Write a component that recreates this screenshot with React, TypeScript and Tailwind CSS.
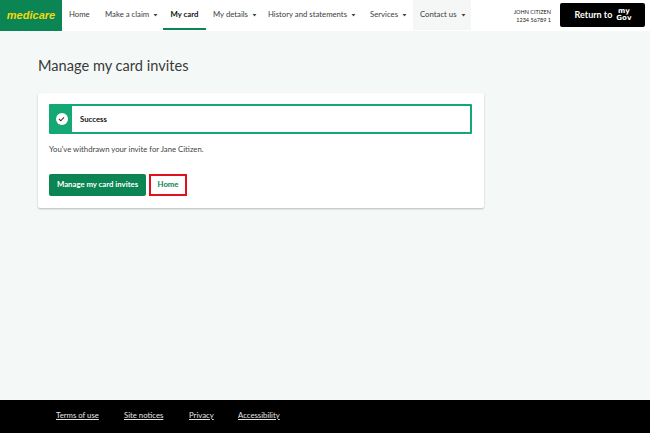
const font = { fontFamily: 'Lato, "Open Sans", "Liberation Sans", sans-serif' };

function Caret() {
  return (
    <svg width="5" height="3" viewBox="0 0 5 3" className="ml-[4px] mt-[1px] shrink-0">
      <path d="M0.5 0h4L2.5 2.5z" fill="#444" />
    </svg>
  );
}

function NavItem({ label, caret, className }: { label: string; caret?: boolean; className: string }) {
  return (
    <a className={`flex items-center whitespace-nowrap text-[7.75px] text-[#3b3b3b] ${className}`}>
      {label}
      {caret && <Caret />}
    </a>
  );
}

export default function App() {
  return (
    <div style={font} className="flex h-[433px] w-[650px] flex-col overflow-hidden bg-[#f4f9f7]">
      <header className="flex h-[31px] shrink-0 items-stretch bg-white">
        <div className="flex w-[62px] items-center justify-center bg-[#0a8553]">
          <span className="text-[11px] font-bold italic leading-none text-[#f5d90a]" style={{ fontFamily: '"Liberation Sans", sans-serif' }}>
            medicare
          </span>
        </div>
        <nav className="flex h-[30px] items-stretch">
          <NavItem label="Home" className="w-[43px] pl-[7px]" />
          <NavItem label="Make a claim" caret className="w-[58px]" />
          <a className="flex w-[43px] items-center justify-center border-b-2 border-[#0a8553] pt-[2px] text-[7.75px] font-bold text-[#111]">
            My card
          </a>
          <NavItem label="My details" caret className="w-[55px] pl-[7px]" />
          <NavItem label="History and statements" caret className="w-[102px] pl-[7px]" />
          <NavItem label="Services" caret className="w-[50px] pl-[7px]" />
          <NavItem label="Contact us" caret className="w-[58px] pl-[7px] bg-[#f5f6f6]" />
        </nav>
        <div className="ml-auto flex items-start pt-[3px] pr-[5px]">
          <div className="mr-[9px] pt-[5px] text-right text-[5.5px] leading-[8px] text-[#222]">
            <div>JOHN CITIZEN</div>
            <div>1234 56789 1</div>
          </div>
          <a className="flex h-[24px] w-[85px] items-center justify-center rounded-[2px] bg-black pl-[1px] text-white">
            <span className="text-[9px] font-bold">Return to</span>
            <span className="ml-[4px] text-center text-[7px] font-bold leading-[7.5px]" style={{ fontFamily: '"DejaVu Sans", sans-serif' }}>
              <span className="block">my</span>
              <span className="block">Gov</span>
            </span>
          </a>
        </div>
      </header>

      <main className="flex-1 pl-[38px] pt-[24px]">
        <h1 className="text-[14.6px] font-normal leading-[22px] text-[#3a3a3a]">Manage my card invites</h1>
        <section className="mt-[16px] h-[115px] w-[446px] rounded-[2px] bg-white px-[11px] pt-[11px] shadow-[0_1px_2px_rgba(0,0,0,0.25)]">
          <div className="flex h-[30px] w-[423px] overflow-hidden rounded-[1px] border-2 border-[#14a874]">
            <div className="flex w-[21px] shrink-0 items-center justify-center bg-[#14a874]">
              <span className="flex h-[12px] w-[12px] items-center justify-center rounded-full bg-white">
                <svg width="7" height="6" viewBox="0 0 7 6">
                  <path d="M1 3l1.8 1.8L6 1.3" fill="none" stroke="#4a2a3a" strokeWidth="1.1" />
                </svg>
              </span>
            </div>
            <div className="flex flex-1 items-center pl-[8px] pt-[1px] text-[7.75px] font-bold text-[#111]">Success</div>
          </div>
          <p className="mt-[10px] text-[7.75px] leading-[11px] text-[#444]">You've withdrawn your invite for Jane Citizen.</p>
          <div className="mt-[19px] flex gap-[3px]">
            <a className="flex h-[22px] w-[97px] items-center justify-center rounded-[2px] bg-[#0a8553] text-[7.75px] font-bold text-white">
              Manage my card invites
            </a>
            <a className="flex h-[22px] w-[38px] items-center justify-center border-2 border-[#e0101c] text-[7.75px] font-bold text-[#0a8553]">
              Home
            </a>
          </div>
        </section>
      </main>

      <footer className="flex h-[33px] shrink-0 items-center bg-black pb-[2px] pl-[56px] text-[7.75px] text-[#e4e4e4]">
        <a className="w-[68px] underline">Terms of use</a>
        <a className="w-[65px] underline">Site notices</a>
        <a className="w-[49px] underline">Privacy</a>
        <a className="underline">Accessibility</a>
      </footer>
    </div>
  );
}
